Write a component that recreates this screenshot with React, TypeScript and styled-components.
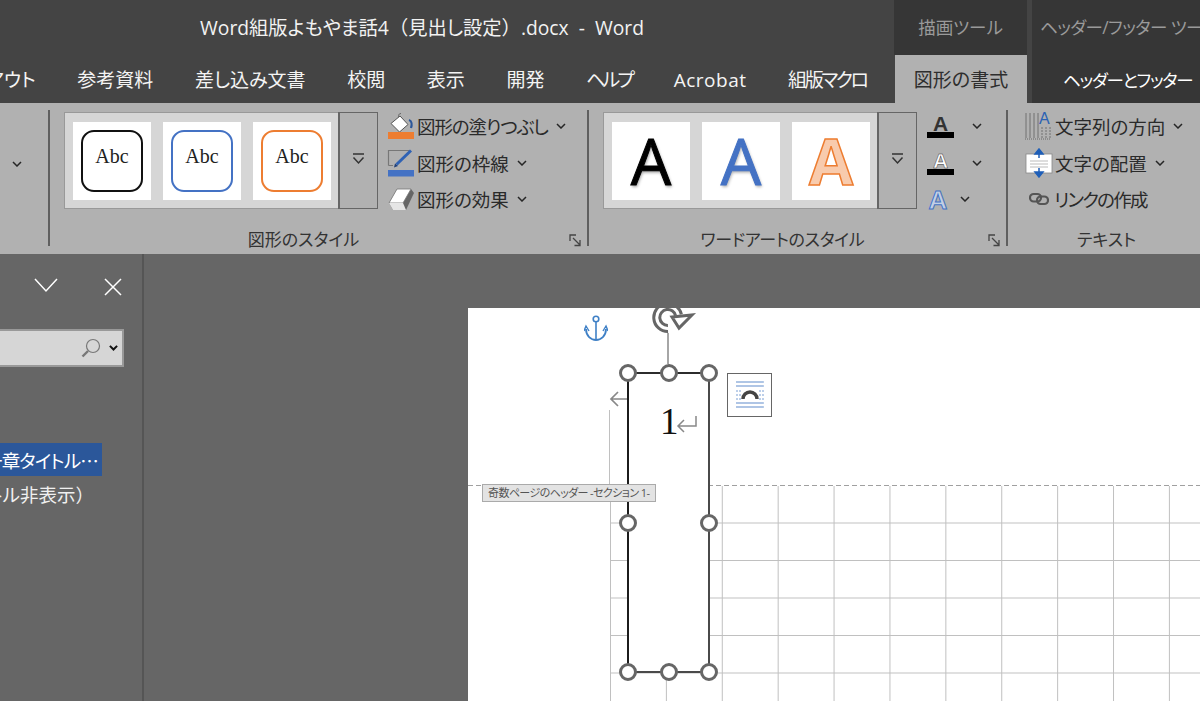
import React from 'react';
import styled, { createGlobalStyle } from 'styled-components';

const JP = `"Open Sans", "Noto Sans CJK JP", sans-serif`;

const GlobalStyle = createGlobalStyle`
    html, body {
        margin: 0;
        padding: 0;
        background: #666;
    }
    * {
        box-sizing: border-box;
    }
`;

const Chevron = ({ w = 10, color = '#262626', sw = 1.5 }: { w?: number; color?: string; sw?: number }) => (
    <svg width={w} height={w * 0.6} viewBox="0 0 10 6" style={{ flexShrink: 0, display: 'block' }}>
        <polyline points="1,1 5,5 9,1" fill="none" stroke={color} strokeWidth={sw} vectorEffect="non-scaling-stroke" />
    </svg>
);

const BucketIcon = () => (
    <svg width="28" height="28" viewBox="0 0 28 28">
        <path d="M14 1.5 C11 1.5 11 5 12.5 7" fill="none" stroke="#666" strokeWidth="1" />
        <polygon points="4,11.5 13,4 21,12.5 12.5,20" fill="#fff" stroke="#555" strokeWidth="1" />
        <path d="M22 8 C25 9 25 13 24 16" fill="none" stroke="#2b579a" strokeWidth="2.2" />
        <rect x="1" y="20" width="26" height="7" fill="#ed7d31" />
    </svg>
);

const PenIcon = () => (
    <svg width="28" height="28" viewBox="0 0 28 28">
        <path d="M22 1.5 H1.5 V16.5 M1.5 16.5 H6" fill="none" stroke="#777" strokeWidth="1.2" />
        <path d="M24 1.5 L9.5 15.5" stroke="#2f62b4" strokeWidth="3" />
        <polygon points="7,18.5 8,14.5 11,17" fill="#1f3f78" />
        <rect x="1" y="21" width="26" height="6.5" fill="#4472c4" />
    </svg>
);

const EraserIcon = () => (
    <svg width="28" height="28" viewBox="0 0 28 28">
        <polygon points="2,18 10,4 24,4 27,8 19,25 6,25" fill="#666" />
        <polygon points="2,18 10,4 24,4 16,18" fill="#fff" stroke="#777" strokeWidth="0.8" />
        <polygon points="2,18 16,18 19,25 6,25" fill="#e6e6e6" />
    </svg>
);

const DirectionIcon = () => (
    <svg width="28" height="30" viewBox="0 0 28 30">
        {[1, 5, 9, 13, 17, 21, 25].map((x, i) => (
            <line key={x} x1={x} x2={x} y1={i > 3 ? 16 : 2} y2="27" stroke="#707070" strokeWidth="1" strokeDasharray={i > 3 ? '2 1' : undefined} />
        ))}
        <line x1="0" x2="26" y1="28" y2="28" stroke="#666" strokeWidth="1" strokeDasharray="1 1" />
        <text x="14" y="13" fontFamily="Liberation Sans" fontSize="16" fill="#2b62b4">A</text>
    </svg>
);

const AlignIcon = () => (
    <svg width="28" height="30" viewBox="0 0 28 30">
        <rect x="1" y="6" width="26" height="19" fill="#fff" stroke="#888" strokeWidth="0.8" />
        <line x1="5" x2="23" y1="13" y2="13" stroke="#bbb" />
        <line x1="5" x2="23" y1="16" y2="16" stroke="#bbb" />
        <line x1="5" x2="23" y1="19" y2="19" stroke="#bbb" />
        <path d="M14 1 L10 6 H18 Z M14 5 V10" fill="#1f5fb8" stroke="#1f5fb8" strokeWidth="1.5" />
        <path d="M14 29 L10 24 H18 Z M14 25 V20" fill="#1f5fb8" stroke="#1f5fb8" strokeWidth="1.5" />
    </svg>
);

const LinkIcon = () => (
    <svg width="20" height="14" viewBox="0 0 20 14">
        <rect x="1" y="2" width="11" height="7.5" rx="3.7" fill="none" stroke="#555" strokeWidth="2.2" />
        <rect x="8" y="4.5" width="11" height="7.5" rx="3.7" fill="none" stroke="#555" strokeWidth="2.2" />
    </svg>
);

const Launcher = () => (
    <LauncherBox>
        <svg width="13" height="13" viewBox="0 0 13 13">
            <path d="M1 7 V1 H7" fill="none" stroke="#444" strokeWidth="1.3" />
            <path d="M4 4 L11 11 M11 6 V11.5 H5.5" fill="none" stroke="#444" strokeWidth="1.3" />
        </svg>
    </LauncherBox>
);

const ExpandButton = () => (
    <Expand>
        <svg width="13" height="12" viewBox="0 0 13 12">
            <line x1="1" x2="12" y1="1" y2="1" stroke="#333" strokeWidth="1.5" />
            <polyline points="1.5,4.5 6.5,10 11.5,4.5" fill="none" stroke="#333" strokeWidth="1.5" />
        </svg>
    </Expand>
);

const shapeTiles = ['#111', '#4472c4', '#ed7d31'];

function App() {
    return (
        <Root>
            <GlobalStyle />
            <TitleRow>
                <TitleText>Word組版よもやま話4<WidePunct>（</WidePunct>見出し設定<WidePunct>）</WidePunct>.docx &nbsp;-&nbsp; Word</TitleText>
                <ContextTitle $width={133}>描画ツール</ContextTitle>
                <ContextTitle $width={168} $clip>ヘッダー/フッター ツール</ContextTitle>
            </TitleRow>

            <TabRow>
                <Tab>レイアウト</Tab>
                <Tab>参考資料</Tab>
                <Tab>差し込み文書</Tab>
                <Tab>校閲</Tab>
                <Tab>表示</Tab>
                <Tab>開発</Tab>
                <Tab $tight={2.8}>ヘルプ</Tab>
                <Tab $tight={-0.5}>Acrobat</Tab>
                <Tab $tight={2.4}>組版マクロ</Tab>
                <ActiveTab>図形の書式</ActiveTab>
                <ContextTab $tight={1.3}>ヘッダーとフッター</ContextTab>
            </TabRow>

            <Ribbon>
                <RibbonGroup $width={50}>
                    <LeadChevron><Chevron /></LeadChevron>
                </RibbonGroup>

                <RibbonGroup $width={539}>
                    <GroupBody>
                        <Gallery>
                            <Tiles>
                                {shapeTiles.map(c => (
                                    <Tile key={c}>
                                        <ShapeSwatch $color={c}>Abc</ShapeSwatch>
                                    </Tile>
                                ))}
                            </Tiles>
                            <ExpandButton />
                        </Gallery>
                        <ButtonStack>
                            <RibbonButton>
                                <IconSlot><BucketIcon /></IconSlot>
                                <ButtonLabel $tight={1.1}>図形の塗りつぶし</ButtonLabel>
                                <ChevronSlot><Chevron /></ChevronSlot>
                            </RibbonButton>
                            <RibbonButton>
                                <IconSlot><PenIcon /></IconSlot>
                                <ButtonLabel>図形の枠線</ButtonLabel>
                                <ChevronSlot><Chevron /></ChevronSlot>
                            </RibbonButton>
                            <RibbonButton>
                                <IconSlot><EraserIcon /></IconSlot>
                                <ButtonLabel>図形の効果</ButtonLabel>
                                <ChevronSlot><Chevron /></ChevronSlot>
                            </RibbonButton>
                        </ButtonStack>
                    </GroupBody>
                    <GroupLabel>図形のスタイル</GroupLabel>
                    <Launcher />
                </RibbonGroup>

                <RibbonGroup $width={419}>
                    <GroupBody>
                        <Gallery>
                            <Tiles>
                                <Tile><ArtLetter $kind="black">A</ArtLetter></Tile>
                                <Tile><ArtLetter $kind="blue">A</ArtLetter></Tile>
                                <Tile><ArtLetter $kind="orange">A</ArtLetter></Tile>
                            </Tiles>
                            <ExpandButton />
                        </Gallery>
                        <ButtonStack $left={10}>
                            <RibbonButton>
                                <FontIcon $bar>
                                    <FontA $kind="dark">A</FontA>
                                </FontIcon>
                                <ChevronSlot $left={18}><Chevron /></ChevronSlot>
                            </RibbonButton>
                            <RibbonButton>
                                <FontIcon $bar>
                                    <FontA $kind="white">A</FontA>
                                </FontIcon>
                                <ChevronSlot $left={18}><Chevron /></ChevronSlot>
                            </RibbonButton>
                            <RibbonButton>
                                <FontIcon $narrow>
                                    <FontA $kind="glow">A</FontA>
                                </FontIcon>
                                <ChevronSlot $left={11}><Chevron /></ChevronSlot>
                            </RibbonButton>
                        </ButtonStack>
                    </GroupBody>
                    <GroupLabel $tight={0.3}>ワードアートのスタイル</GroupLabel>
                    <Launcher />
                </RibbonGroup>

                <LastGroup>
                    <GroupBody>
                        <ButtonStack $left={0}>
                            <RibbonButton>
                                <IconSlot><DirectionIcon /></IconSlot>
                                <ButtonLabel>文字列の方向</ButtonLabel>
                                <ChevronSlot><Chevron /></ChevronSlot>
                            </RibbonButton>
                            <RibbonButton>
                                <IconSlot><AlignIcon /></IconSlot>
                                <ButtonLabel>文字の配置</ButtonLabel>
                                <ChevronSlot><Chevron /></ChevronSlot>
                            </RibbonButton>
                            <RibbonButton>
                                <IconSlot $gap={1}><LinkIcon /></IconSlot>
                                <ButtonLabel $tight={1.7}>リンクの作成</ButtonLabel>
                            </RibbonButton>
                        </ButtonStack>
                    </GroupBody>
                    <GroupLabel>テキスト</GroupLabel>
                </LastGroup>
            </Ribbon>

            <Main>
                <Pane>
                    <PaneHeader>
                        <svg width="24" height="15" viewBox="0 0 24 15">
                            <polyline points="1,1 12,13 23,1" fill="none" stroke="#fff" strokeWidth="1.5" />
                        </svg>
                        <svg width="18" height="18" viewBox="0 0 18 18">
                            <path d="M1 1 L17 17 M17 1 L1 17" fill="none" stroke="#fff" strokeWidth="1.5" />
                        </svg>
                    </PaneHeader>
                    <SearchBox>
                        <svg width="20" height="20" viewBox="0 0 20 20">
                            <circle cx="12" cy="8" r="6.5" fill="none" stroke="#777" strokeWidth="1.2" />
                            <line x1="7" y1="13" x2="1.5" y2="18.5" stroke="#777" strokeWidth="2.4" />
                        </svg>
                        <Chevron w={9} color="#111" sw={2} />
                    </SearchBox>
                    <HeadingItem $selected>一章タイトル⋯</HeadingItem>
                    <HeadingItem>（タイトル非表示<WidePunct>）</WidePunct></HeadingItem>
                </Pane>

                <Workspace>
                    <Page>
                        <HeaderArea>
                            <GridLines />
                        </HeaderArea>

                        <Anchor>
                            <svg width="24" height="28" viewBox="0 0 24 28">
                                <circle cx="12" cy="4" r="2.8" fill="none" stroke="#3f80c6" strokeWidth="1.6" />
                                <line x1="12" y1="7" x2="12" y2="25" stroke="#3f80c6" strokeWidth="1.6" />
                                <path d="M2 14 C2 21 7 25 12 25 C17 25 22 21 22 14" fill="none" stroke="#3f80c6" strokeWidth="1.8" />
                                <path d="M0 16 L2 11 L5 16 M19 16 L22 11 L24 16" fill="none" stroke="#3f80c6" strokeWidth="1.4" />
                            </svg>
                        </Anchor>

                        <RotateHandle>
                            <svg width="46" height="56" viewBox="0 0 46 56">
                                <line x1="17" y1="25" x2="17" y2="56" stroke="#888" strokeWidth="1.5" />
                                <path d="M17 20.5 A 11 11 0 1 1 27.5 7" fill="none" stroke="#666" strokeWidth="9" />
                                <path d="M17 20.5 A 11 11 0 1 1 27.5 7" fill="none" stroke="#fff" strokeWidth="3" />
                                <polygon points="21,9 41,7 28,20" fill="#fff" stroke="#666" strokeWidth="3" />
                            </svg>
                        </RotateHandle>

                        <MarginLine />
                        <BackArrow>
                            <svg width="20" height="18" viewBox="0 0 20 18">
                                <path d="M19 9 H2 M9 2 L2 9 L9 16" fill="none" stroke="#888" strokeWidth="1.7" />
                            </svg>
                        </BackArrow>

                        <SelectedShape>
                            <PageNumber>
                                1
                                <svg width="21" height="18" viewBox="0 0 21 18">
                                    <path d="M20 1 V11 H2 M8 5 L2 11 L8 17" fill="none" stroke="#888" strokeWidth="1.5" />
                                </svg>
                            </PageNumber>
                            <Handle $x="left" $y="top" />
                            <Handle $x="middle" $y="top" />
                            <Handle $x="right" $y="top" />
                            <Handle $x="left" $y="middle" />
                            <Handle $x="right" $y="middle" />
                            <Handle $x="left" $y="bottom" />
                            <Handle $x="middle" $y="bottom" />
                            <Handle $x="right" $y="bottom" />
                        </SelectedShape>

                        <HeaderTag>奇数ページのヘッダー -セクション 1-</HeaderTag>

                        <LayoutButton>
                            <svg width="28" height="28" viewBox="0 0 28 28">
                                {[1, 5, 22, 26].map(y => (
                                    <line key={y} x1="0" x2="28" y1={y} y2={y} stroke="#7a9fd4" strokeWidth="1.2" />
                                ))}
                                {[10, 14, 18].map(y => (
                                    <g key={y}>
                                        <line x1="0" x2="5" y1={y} y2={y} stroke="#7a9fd4" strokeWidth="1" strokeDasharray="2 1" />
                                        <line x1="23" x2="28" y1={y} y2={y} stroke="#7a9fd4" strokeWidth="1" strokeDasharray="2 1" />
                                    </g>
                                ))}
                                <path d="M7 18 A 7 7 0 0 1 21 18" fill="none" stroke="#444" strokeWidth="3.4" />
                            </svg>
                        </LayoutButton>
                    </Page>
                </Workspace>
            </Main>
        </Root>
    );
}

const Root = styled.div`
    width: 1200px;
    height: 701px;
    overflow: hidden;
    display: flex;
    flex-direction: column;
    background: #666;
    font-family: ${JP};
    font-feature-settings: "palt";
`;

const TitleRow = styled.div`
    height: 55px;
    display: flex;
    background: #444;
    color: #f2f2f2;
`;

const TitleText = styled.div`
    width: 894px;
    flex-shrink: 0;
    padding: 14px 0 0 200px;
    font-size: 19.3px;
    line-height: 28px;
    white-space: pre;
`;

const WidePunct = styled.span`
    font-feature-settings: normal;
`;

const ContextTitle = styled.div<{ $width: number; $clip?: boolean }>`
    width: ${p => p.$width}px;
    flex-shrink: 0;
    margin-right: 5px;
    background: #363636;
    color: #9a9a9a;
    font-size: 17.5px;
    line-height: 54px;
    text-align: ${p => (p.$clip ? 'left' : 'center')};
    padding-left: ${p => (p.$clip ? '8px' : '0')};
    letter-spacing: ${p => (p.$clip ? '-0.6px' : '0')};
    white-space: nowrap;
    overflow: hidden;
`;

const TabRow = styled.div`
    height: 48px;
    display: flex;
    background: #444;
    margin-left: -68px;
`;

const Tab = styled.div<{ $tight?: number }>`
    padding: 0 20.8px;
    font-size: 19px;
    line-height: 50px;
    color: #f4f4f4;
    white-space: nowrap;
    letter-spacing: ${p => -(p.$tight ?? 0)}px;
`;

const ActiveTab = styled(Tab)`
    width: 132px;
    padding: 0;
    margin-left: auto;
    text-align: center;
    background: #b1b1b1;
    color: #2e2e2e;
`;

const ContextTab = styled(Tab)`
    width: 168px;
    flex-shrink: 0;
    margin-left: 5px;
    padding: 0 0 0 31px;
    background: #363636;
    color: #fff;
    font-size: 17.5px;
`;

const Ribbon = styled.div`
    height: 151px;
    display: flex;
    align-items: flex-start;
    padding-top: 7px;
    background: #b1b1b1;
    color: #2a2a2a;
    font-size: 18.5px;
`;

const RibbonGroup = styled.div<{ $width: number }>`
    position: relative;
    width: ${p => p.$width}px;
    height: 136px;
    display: flex;
    flex-direction: column;
    border-right: 2px solid #5f5f5f;
`;

const LastGroup = styled.div`
    flex: 1;
    height: 136px;
    display: flex;
    flex-direction: column;
    padding-left: 17px;
`;

const LeadChevron = styled.div`
    padding: 51px 0 0 12px;
`;

const GroupBody = styled.div`
    height: 120px;
    display: flex;
    padding-left: 14px;
    ${LastGroup} & {
        padding-left: 0;
    }
`;

const GroupLabel = styled.div<{ $tight?: number }>`
    height: 20px;
    margin-bottom: -4px;
    font-size: 17px;
    line-height: 20px;
    text-align: center;
    color: #333;
    white-space: nowrap;
    padding-right: 30px;
    letter-spacing: ${p => -(p.$tight ?? 0)}px;
    ${LastGroup} & {
        padding-right: 12px;
    }
`;

const LauncherBox = styled.div`
    position: absolute;
    right: 5px;
    bottom: -1px;
    width: 13px;
    height: 13px;
    line-height: 0;
`;

const Gallery = styled.div`
    width: 314px;
    height: 97px;
    margin-top: 2px;
    flex-shrink: 0;
    display: flex;
    justify-content: space-between;
    background: #d6d6d6;
    border: 1px solid #999;
`;

const Tiles = styled.div`
    display: flex;
    gap: 12px;
    padding: 9px 0 0 8px;
`;

const Tile = styled.div`
    width: 78px;
    height: 78px;
    display: flex;
    align-items: center;
    justify-content: center;
    background: #fff;
`;

const ShapeSwatch = styled.div<{ $color: string }>`
    width: 62px;
    height: 62px;
    padding-top: 11px;
    border: 2px solid ${p => p.$color};
    border-radius: 13px;
    font-family: "Liberation Serif", serif;
    font-size: 20px;
    line-height: 26px;
    text-align: center;
    color: #222;
`;

const artStyles: Record<string, string> = {
    black: 'color: #000; -webkit-text-stroke: 1px #000; text-shadow: 1px 2px 3px rgba(0,0,0,.35);',
    blue: 'color: #4472c4; -webkit-text-stroke: 1px #4472c4; text-shadow: 1px 2px 3px rgba(0,0,0,.3);',
    orange: 'color: #f8cbad; font-weight: 700; -webkit-text-stroke: 1.5px #ed7d31;',
};

const ArtLetter = styled.div<{ $kind: string }>`
    font-family: "Open Sans", sans-serif;
    font-size: 64px;
    font-weight: 500;
    line-height: 78px;
    ${p => artStyles[p.$kind]}
`;

const Expand = styled.div`
    width: 38px;
    display: flex;
    align-items: center;
    justify-content: center;
    background: #b1b1b1;
    border-left: 1px solid #666;
    outline: 1px solid #666;
    padding-bottom: 3px;
`;

const ButtonStack = styled.div<{ $left?: number }>`
    margin: -2px 0 0 ${p => p.$left ?? 9}px;
    display: flex;
    flex-direction: column;
`;

const RibbonButton = styled.div`
    height: 36.5px;
    display: flex;
    align-items: center;
    white-space: nowrap;
`;

const ButtonLabel = styled.span<{ $tight?: number }>`
    letter-spacing: ${p => -(p.$tight ?? 0)}px;
`;

const IconSlot = styled.span<{ $gap?: number }>`
    width: 28px;
    margin-right: ${p => p.$gap ?? 2}px;
    display: flex;
    align-items: center;
    justify-content: center;
`;

const ChevronSlot = styled.span<{ $left?: number }>`
    margin-left: ${p => p.$left ?? 8}px;
`;

const FontIcon = styled.span<{ $bar?: boolean; $narrow?: boolean }>`
    width: ${p => (p.$narrow ? 22 : 27)}px;
    height: 24px;
    display: flex;
    justify-content: center;
    align-items: flex-start;
    ${p => p.$bar && 'border-bottom: 6px solid #000;'}
`;

const fontAStyles: Record<string, string> = {
    dark: 'color: #333; font-weight: 700;',
    white: 'color: #fff; -webkit-text-stroke: 0.5px #333; font-weight: 700;',
    glow: 'color: #c3d0e4; -webkit-text-stroke: 1px #4472c4; font-weight: 700;',
};

const FontA = styled.span<{ $kind: string }>`
    font-family: "Liberation Sans", sans-serif;
    font-size: ${p => (p.$kind === 'glow' ? 26 : 21)}px;
    line-height: ${p => (p.$kind === 'glow' ? 26 : 19)}px;
    ${p => fontAStyles[p.$kind]}
`;

const Main = styled.div`
    flex: 1;
    display: flex;
    min-height: 0;
`;

const Pane = styled.div`
    width: 144px;
    flex-shrink: 0;
    border-right: 2px solid #555;
    color: #f0f0f0;
    font-size: 18.5px;
`;

const PaneHeader = styled.div`
    height: 75px;
    display: flex;
    align-items: flex-start;
    gap: 46px;
    padding: 24px 0 0 34px;
`;

const SearchBox = styled.div`
    width: 124px;
    height: 38px;
    display: flex;
    align-items: center;
    justify-content: flex-end;
    gap: 8px;
    padding: 0 4px 0 0;
    background: #d6d6d6;
    border: 2px solid #999;
    border-left: none;
`;

const HeadingItem = styled.div<{ $selected?: boolean }>`
    width: ${p => (p.$selected ? 102 : 94)}px;
    height: ${p => (p.$selected ? 33 : 36)}px;
    margin-top: ${p => (p.$selected ? 76 : 0)}px;
    display: flex;
    align-items: center;
    justify-content: flex-end;
    overflow: hidden;
    white-space: nowrap;
    padding-right: ${p => (p.$selected ? 4 : 0)}px;
    letter-spacing: ${p => (p.$selected ? '-0.8px' : '0')};
    background: ${p => (p.$selected ? '#2b579a' : 'transparent')};
    color: ${p => (p.$selected ? '#fff' : '#f0f0f0')};
`;

const Workspace = styled.div`
    flex: 1;
    min-width: 0;
    padding: 54px 0 0 324px;
`;

const Page = styled.div`
    position: relative;
    height: 100%;
    overflow: hidden;
    padding-top: 177px;
    background: #fff;
`;

const HeaderArea = styled.div`
    height: 216px;
    padding-top: 1px;
    background-image: repeating-linear-gradient(to right, #a0a0a0 0 5px, transparent 5px 8px);
    background-size: 100% 1px;
    background-repeat: no-repeat;
`;

const GridLines = styled.div`
    height: 100%;
    margin-left: 142px;
    background-image:
        linear-gradient(to right, #c0c0c0 1px, transparent 1px),
        linear-gradient(to bottom, #c0c0c0 1px, transparent 1px);
    background-size: 55.9px 37.5px;
    background-position: 0 -1px;
`;

const HeaderTag = styled.div`
    position: absolute;
    left: 14px;
    top: 176px;
    width: 174px;
    height: 18px;
    padding-left: 5px;
    background: #e3e3e3;
    border: 1px solid #aaa;
    color: #555;
    font-size: 11px;
    letter-spacing: -0.6px;
    line-height: 16px;
    white-space: nowrap;
`;

const Anchor = styled.div`
    position: absolute;
    left: 116px;
    top: 7px;
    line-height: 0;
`;

const RotateHandle = styled.div`
    position: absolute;
    left: 183px;
    top: 0;
    line-height: 0;
`;

const MarginLine = styled.div`
    position: absolute;
    left: 141px;
    top: 102px;
    width: 1px;
    height: 75px;
    background: #c0c0c0;
`;

const BackArrow = styled.div`
    position: absolute;
    left: 141px;
    top: 82px;
    line-height: 0;
`;

const SelectedShape = styled.div`
    position: absolute;
    left: 159px;
    top: 64px;
    width: 83px;
    height: 301px;
    background: #fff;
    border: 2px solid #4a4a4a;
    border-left-color: #1c1c1c;
    border-top-color: #2c2c2c;
`;

const PageNumber = styled.div`
    display: flex;
    align-items: center;
    margin-top: 28px;
    padding-left: 31px;
    font-family: "Liberation Serif", serif;
    font-size: 37px;
    line-height: 40px;
    color: #111;
    svg {
        margin: 4px 0 0 -3px;
    }
`;

const handleX = { left: '-1px', middle: '50%', right: 'calc(100% + 1px)' };
const handleY = { top: '-1px', middle: '50%', bottom: 'calc(100% + 1px)' };

const Handle = styled.div<{ $x: keyof typeof handleX; $y: keyof typeof handleY }>`
    position: absolute;
    left: ${p => handleX[p.$x]};
    top: ${p => handleY[p.$y]};
    width: 18px;
    height: 18px;
    margin: -9px 0 0 -9px;
    border-radius: 50%;
    background: #fff;
    border: 3px solid #666;
`;

const LayoutButton = styled.div`
    position: absolute;
    left: 259px;
    top: 65px;
    width: 45px;
    height: 44px;
    display: flex;
    align-items: center;
    justify-content: center;
    background: #fff;
    border: 1px solid #666;
`;

export default App;
